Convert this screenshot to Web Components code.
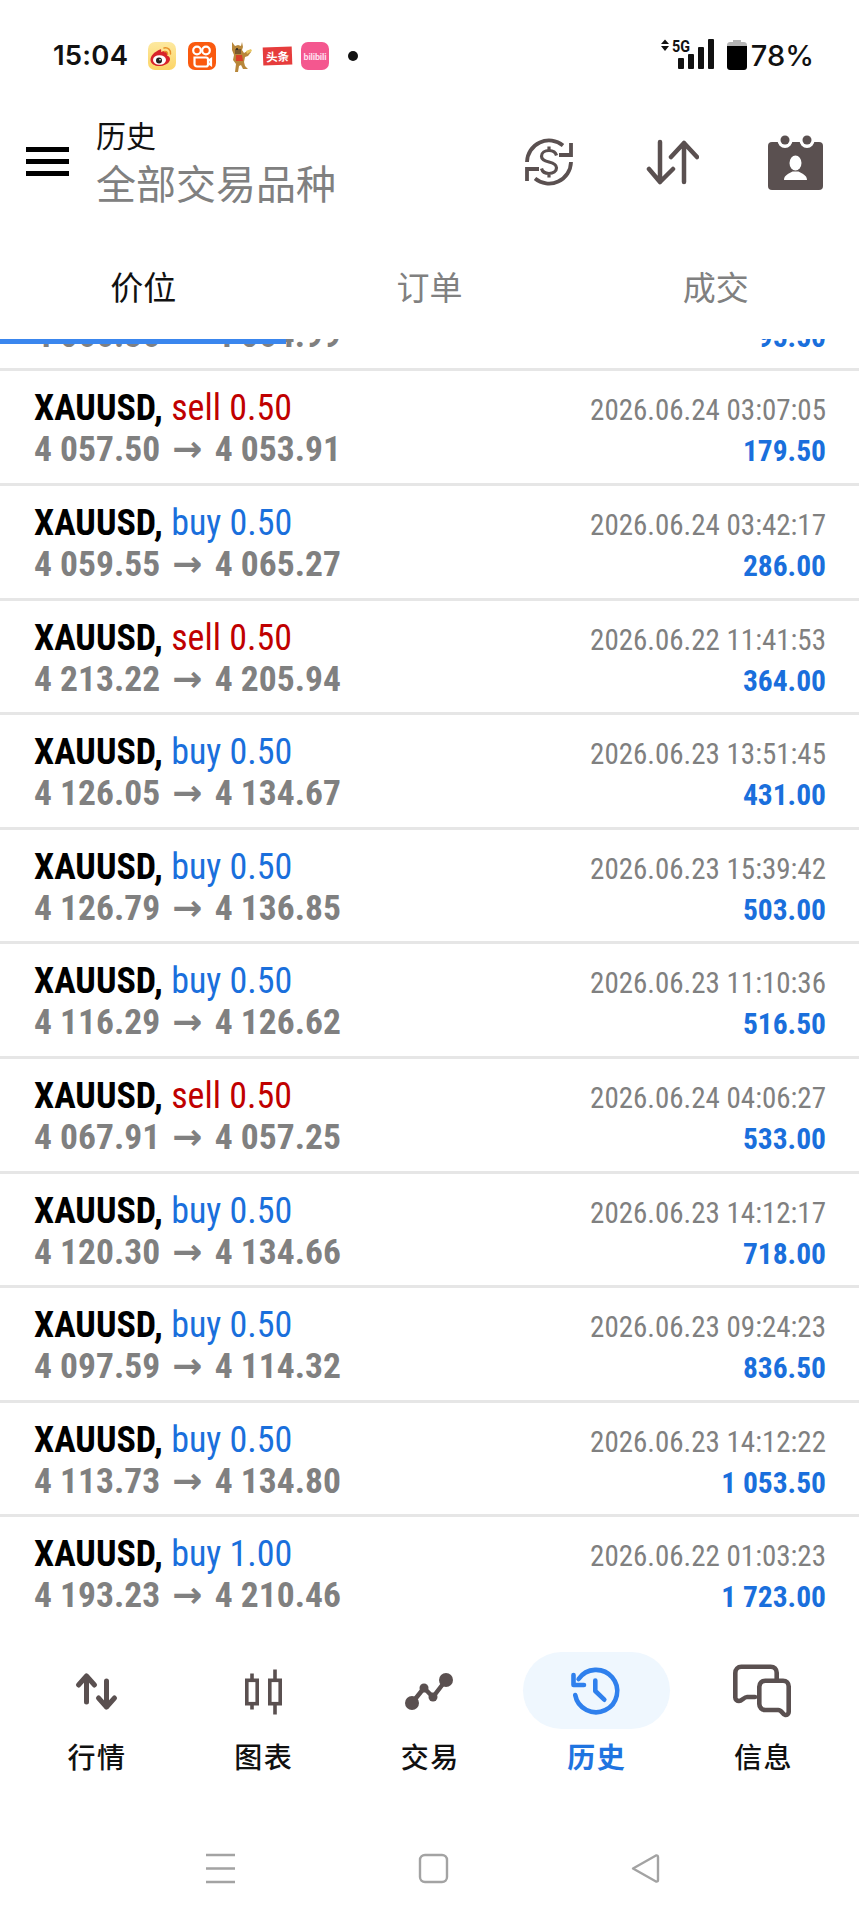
<!DOCTYPE html>
<html lang="zh"><head><meta charset="utf-8"><title>历史</title>
<style>
html,body{margin:0;padding:0;background:#fff}
body{width:859px;height:1920px;overflow:hidden;font-family:Roboto,"Noto Sans CJK SC",sans-serif}
</style></head><body>
<mt-app>
  <mt-status></mt-status>
  <mt-appbar></mt-appbar>
  <mt-tabs></mt-tabs>
  <mt-list>
    <mt-row sym="XAUUSD" side="sell" vol="0.50" from="4 066.36" to="4 064.99" time="2026.06.24 02:41:18" profit="95.50"></mt-row>
    <mt-row sym="XAUUSD" side="sell" vol="0.50" from="4 057.50" to="4 053.91" time="2026.06.24 03:07:05" profit="179.50"></mt-row>
    <mt-row sym="XAUUSD" side="buy" vol="0.50" from="4 059.55" to="4 065.27" time="2026.06.24 03:42:17" profit="286.00"></mt-row>
    <mt-row sym="XAUUSD" side="sell" vol="0.50" from="4 213.22" to="4 205.94" time="2026.06.22 11:41:53" profit="364.00"></mt-row>
    <mt-row sym="XAUUSD" side="buy" vol="0.50" from="4 126.05" to="4 134.67" time="2026.06.23 13:51:45" profit="431.00"></mt-row>
    <mt-row sym="XAUUSD" side="buy" vol="0.50" from="4 126.79" to="4 136.85" time="2026.06.23 15:39:42" profit="503.00"></mt-row>
    <mt-row sym="XAUUSD" side="buy" vol="0.50" from="4 116.29" to="4 126.62" time="2026.06.23 11:10:36" profit="516.50"></mt-row>
    <mt-row sym="XAUUSD" side="sell" vol="0.50" from="4 067.91" to="4 057.25" time="2026.06.24 04:06:27" profit="533.00"></mt-row>
    <mt-row sym="XAUUSD" side="buy" vol="0.50" from="4 120.30" to="4 134.66" time="2026.06.23 14:12:17" profit="718.00"></mt-row>
    <mt-row sym="XAUUSD" side="buy" vol="0.50" from="4 097.59" to="4 114.32" time="2026.06.23 09:24:23" profit="836.50"></mt-row>
    <mt-row sym="XAUUSD" side="buy" vol="0.50" from="4 113.73" to="4 134.80" time="2026.06.23 14:12:22" profit="1 053.50"></mt-row>
    <mt-row sym="XAUUSD" side="buy" vol="1.00" from="4 193.23" to="4 210.46" time="2026.06.22 01:03:23" profit="1 723.00"></mt-row>
  </mt-list>
  <mt-nav>
    <mt-nav-item label="行情"><svg width="60" height="60" viewBox="0 0 60 60" fill="none" stroke="#5a5050" stroke-width="5" stroke-linecap="round" stroke-linejoin="round"><path d="M20.500 15V41M12.500 24l8-9 8 9M40.500 20V46M32.500 37l8 9 8-9"/></svg></mt-nav-item>
    <mt-nav-item label="图表"><svg width="60" height="60" viewBox="0 0 60 60" fill="none" stroke="#5a5050" stroke-width="3.600"><path d="M19 12.500V48.500M42 8.500V53.500"/><rect x="13.800" y="19.300" width="10.400" height="23.400" fill="#fff"/><rect x="36.800" y="19.300" width="10.400" height="23.400" fill="#fff"/></svg></mt-nav-item>
    <mt-nav-item label="交易"><svg width="60" height="60" viewBox="0 0 60 60" fill="#5a5050" stroke="#5a5050" stroke-width="4.500" stroke-linejoin="round"><path fill="none" d="M13 42 25 27 34 36 47 19"/><circle cx="13" cy="42" r="7" stroke="none"/><circle cx="25" cy="27" r="4.500" stroke="none"/><circle cx="34" cy="36" r="4.500" stroke="none"/><circle cx="47" cy="19" r="7" stroke="none"/></svg></mt-nav-item>
    <mt-nav-item label="历史" active><svg width="60" height="60" viewBox="0 0 60 60" fill="none" stroke="#2f80ed" stroke-width="4.600" stroke-linecap="round" stroke-linejoin="round"><path d="M12.600 18A21.200 21.200 0 1 1 9.200 34"/><path d="M7.500 14V24H18"/><path d="M29.300 19.500V30L38.300 38.700"/></svg></mt-nav-item>
    <mt-nav-item label="信息"><svg width="60" height="60" viewBox="0 0 60 60" fill="none" stroke="#5a5050" stroke-width="4.600" stroke-linejoin="round" stroke-linecap="round"><path d="M22 36H14c-3 0-5 4-8 4-2 0-3.700-1.500-3.700-3.500V12c0-3.500 2.500-6.200 6-6.200H37.700c3.500 0 6 2.500 6 6V19.800"/><path d="M32.300 19.800H50c3.500 0 5.700 2.300 5.700 5.700V51c0 2-1.500 3.200-3.500 3-3-.4-3-5-7-5H32.300c-3.500 0-6-2.500-6-6V25.800c0-3.500 2.500-6 6-6Z"/></svg></mt-nav-item>
  </mt-nav>
  <mt-gestures></mt-gestures>
</mt-app>
<script>
function def(name, css, html){
  customElements.define(name, class extends HTMLElement{
    constructor(){super();const r=this.attachShadow({mode:'open'});r.innerHTML='<style>'+css+'</style>'+(typeof html==='function'?'':html)}
    connectedCallback(){ if(typeof html==='function'){ this.shadowRoot.innerHTML='<style>'+css+'</style>'+html(this) } }
  });
}
def('mt-app',':host{display:flex;flex-direction:column;width:859px;height:1920px;background:#fff}','<slot></slot>');

def('mt-status',`
:host{display:flex;align-items:center;height:92px;box-sizing:border-box;padding:19px 45px 0 53px;flex:none;color:#111}
.t{font:600 27.500px/1 Inter,Roboto,sans-serif;letter-spacing:.2px;width:94px}
.ic{display:flex;align-items:center}
.b{display:block;flex:none}
.p{font:500 29px/1 Inter,Roboto,sans-serif;margin-left:4px}
.sp{flex:1}
`,`
<span class="t">15:04</span>
<div class="ic">
<svg class="b" width="30" height="30" viewBox="0 0 30 30" style="margin-right:10px"><defs><linearGradient id="w" x1="0" y1="0" x2="0" y2="1"><stop offset="0" stop-color="#fde9a0"/><stop offset="1" stop-color="#fcd466"/></linearGradient></defs><rect x="1" y="1" width="28" height="28" rx="7" fill="url(#w)"/><path d="M13 8.500C7 11 3.500 15 3.500 19c0 4 5 6.500 10 6 6-.5 9.500-4 9.500-7 0-2-1.500-3-3-3.500.5-2 .5-3-.5-4-1.500-1-3.500-.3-5.500.5 .5-2 .2-3-1-2.500Z" fill="#d8232a"/><ellipse cx="12.500" cy="19" rx="6.500" ry="4.800" fill="#fff"/><circle cx="12" cy="19.500" r="3" fill="#222"/><circle cx="13" cy="18.700" r=".8" fill="#fff"/><path d="M17 7c4-1 7 2 6.500 6M17.500 10.500c2-.5 3.200 1 3 2.800" fill="none" stroke="#e8912a" stroke-width="1.500" stroke-linecap="round"/></svg>
<svg class="b" width="30" height="30" viewBox="0 0 30 30" style="margin-right:11px"><rect x="1" y="1" width="28" height="28" rx="7" fill="#fa5a0f"/><g fill="none" stroke="#fff" stroke-width="2.200"><circle cx="10" cy="9.500" r="3.800"/><circle cx="19" cy="9.500" r="3.800"/><path d="M7.500 16.500H19c1.200 0 2 .8 2 2v5c0 1.200-.8 2-2 2H10c-1.500 0-2.500-1-2.500-2.500Z"/><path d="M21 20l3-2v6l-3-2"/></g></svg>
<svg class="b" width="26" height="32" viewBox="0 0 26 32" style="margin-right:9px"><path d="M4 2l3 4 3-1 3 1 1-4 1 5-1 3 2 3 5-3 2 2-3 4-3 1-1 5 1 4 3 3h-5l-2-4-2 1-1 6H7l1-8-3-4 1-5-2-5Z" fill="#b8873a"/><path d="M7 9h6v5H7z" fill="#7a5a30"/><path d="M8 15h6l1 6H8z" fill="#d8402a"/><circle cx="9" cy="9" r="1" fill="#222"/><path d="M18 11l5-2 1 2-5 3z" fill="#e8c560"/></svg>
<span class="b" style="width:29px;height:18px;background:#e63c3c;color:#fff;font:700 11.500px/18px 'Noto Sans CJK SC',sans-serif;text-align:center;transform:rotate(-2deg);margin-right:9px;white-space:nowrap;overflow:hidden">头条</span>
<span class="b" style="width:28px;height:28px;border-radius:7px;background:#f4578f;color:#fde;font:700 9px/30px Roboto,sans-serif;text-align:center;white-space:nowrap;overflow:hidden;letter-spacing:-.2px">bilibili</span>
<span class="b" style="width:10px;height:10px;border-radius:50%;background:#111;margin-left:19px"></span>
</div>
<span class="sp"></span>
<svg class="b" width="54" height="32" viewBox="0 0 54 32" style="margin-right:13px;margin-top:-3px"><path d="M1 6l4-4.500L9 6zM1 8h8l-4 5z" fill="#111"/><rect x="18" y="20" width="6" height="11" rx="1" fill="#111"/><rect x="28" y="16" width="6" height="15" rx="1" fill="#111"/><rect x="38" y="9" width="6" height="22" rx="1" fill="#111"/><rect x="48" y="1" width="6" height="30" rx="1" fill="#111"/><text x="12" y="14" font-family="Roboto,sans-serif" font-weight="700" font-size="17" fill="#111" textLength="18" lengthAdjust="spacingAndGlyphs">5G</text></svg>
<svg class="b" width="20" height="31" viewBox="0 0 20 31" style="margin-top:-3px"><path d="M6 1h8v2h3c1.500 0 3 1 3 3v6H0V6c0-2 1.500-3 3-3h3z" fill="#b5b5b5"/><path d="M0 7h20v21c0 1.700-1.300 3-3 3H3c-1.700 0-3-1.300-3-3z" fill="#000"/></svg>
<span class="p">78%</span>
`);

def('mt-appbar',`
:host{display:flex;align-items:center;height:138px;box-sizing:border-box;flex:none;padding:0 36px 0 26px}
.m{width:43px;height:29px;flex:none;margin-right:27px;display:flex;flex-direction:column;justify-content:space-between}
.m i{display:block;height:5px;background:#000}
.tt{flex:1;display:flex;flex-direction:column;font-family:"Noto Sans CJK SC",sans-serif;padding-top:3px}
.a{font-size:30px;line-height:34px;color:#111;margin-bottom:5px}
.s{font-size:40px;line-height:52px;color:#808080;white-space:nowrap}
.ic{display:flex;align-items:center;padding-top:2px}
svg{display:block;flex:none}
`,`
<div class="m"><i></i><i></i><i></i></div>
<div class="tt"><span class="a">历史</span><span class="s">全部交易品种</span></div>
<div class="ic">
<svg width="50" height="50" viewBox="0 0 50 50" fill="none" stroke="#5a5050" stroke-width="3.800" style="margin-right:71px"><path d="M3 25A22 22 0 0 1 39 8.500M47 25A22 22 0 0 1 11 41.500"/><path d="M47 6V18H35M3 44V32H15"/><path d="M32.500 18.500c-.8-3-3.800-5-7.500-5-4 0-7.500 2-7.500 5.700 0 3.500 3.500 4.800 7.500 5.800 4 1 7.500 2.300 7.500 5.800 0 3.700-3.500 5.700-7.500 5.700-3.700 0-6.700-2-7.500-5M25 9.500v4M25 36.500v4" stroke-width="3.200"/></svg>
<svg width="54" height="46" viewBox="0 0 54 46" fill="none" stroke="#5a5050" stroke-width="4.500" stroke-linecap="round" stroke-linejoin="round" style="margin-right:69px"><path d="M15 3V43M4 30 15 43 28 30M39 43V4M26 18 39 4 52 18"/></svg>
<svg width="55" height="55" viewBox="0 0 55 55"><rect x="0" y="7" width="55" height="48" rx="4" fill="#5a5050"/><circle cx="17" cy="5.500" r="7.500" fill="#fff"/><circle cx="39" cy="5.500" r="7.500" fill="#fff"/><circle cx="17" cy="5" r="4.500" fill="#5a5050"/><circle cx="39" cy="5" r="4.500" fill="#5a5050"/><ellipse cx="27.500" cy="28" rx="6" ry="7.500" fill="#fff"/><path d="M16 45c0-5 5-6.500 8.500-8.500h6c3.500 2 8.500 3.500 8.500 8.500Z" fill="#fff"/></svg>
</div>
`);

def('mt-tabs',`
:host{display:block;flex:none;position:relative;z-index:2}
.r{display:grid;grid-template-columns:repeat(3,286.333px);height:109px;background:#fff;font:33px/1 "Noto Sans CJK SC",sans-serif;color:#808080;text-align:center}
.r span{padding-top:40px;display:block}
.on{color:#111}
.bar{position:absolute;left:0;top:109px;width:286px;height:5px;background:#3a86ee}
`,`
<div class="r"><span class="on">价位</span><span>订单</span><span>成交</span></div><div class="bar"></div>
`);

def('mt-list',`
:host{display:flex;flex-direction:column;justify-content:flex-end;flex:1;min-height:0;overflow:hidden}
`,'<slot></slot>');

def('mt-row',`
:host{display:flex;justify-content:space-between;flex:none;height:114.600px;box-sizing:border-box;border-bottom:3px solid #e6e6e6;padding:17px 33px 0 34px;font-family:Roboto,sans-serif;font-stretch:75%}
:host(:last-child){border-bottom:0}
.l,.rt{display:flex;flex-direction:column}
.rt{align-items:flex-end}
.n{font-size:36px;line-height:41px;white-space:nowrap}
.n b{color:#000;font-weight:700}
.sell{color:#c00000}.buy{color:#1a6fdc}
.pr{font-size:35.500px;line-height:39px;font-weight:700;color:#808080;white-space:nowrap}
.ar{font-family:"DejaVu Sans",sans-serif;font-stretch:normal;font-size:36px;margin:0 4px}
.tm{font-size:29px;line-height:41px;color:#808080;white-space:nowrap;padding-top:2px}
.pf{font-size:29.500px;line-height:38px;font-weight:700;color:#1a6fdc;white-space:nowrap;margin-top:1px}
`,el=>{const a=k=>el.getAttribute(k);return `
<div class="l"><span class="n"><b>${a('sym')},</b> <span class="${a('side')}">${a('side')} ${a('vol')}</span></span><span class="pr">${a('from')} <span class="ar">→</span> ${a('to')}</span></div>
<div class="rt"><span class="tm">${a('time')}</span><span class="pf">${a('profit')}</span></div>`});

def('mt-nav',`
:host{display:grid;grid-template-columns:repeat(5,166.600px);height:176px;box-sizing:border-box;padding:20px 0 0 13px;flex:none}
`,'<slot></slot>');

def('mt-nav-item',`
:host{display:flex;flex-direction:column;align-items:center}
.p{width:147px;height:77px;border-radius:39px;display:flex;align-items:center;justify-content:center}
:host([active]) .p{background:#eff7fe}
.l{font:500 28px/1 "Noto Sans CJK SC",sans-serif;color:#111;margin-top:13px;letter-spacing:1.500px;padding-left:1.500px}
:host([active]) .l{color:#1f74e0;font-weight:700}
`,el=>`<div class="p"><slot></slot></div><span class="l">${el.getAttribute('label')}</span>`);

def('mt-gestures',`
:host{display:block;flex:none;height:112px;box-sizing:border-box;padding-top:44px}
svg{display:block}
`,`
<svg width="859" height="32" viewBox="0 0 859 32" fill="none" stroke="#a3a3a3" stroke-width="2.400" stroke-linejoin="round"><path d="M206 3H235M206 16.500H235M206 30H235"/><rect x="420" y="3" width="27" height="27" rx="5"/><path d="M633 16.500 656 3.500Q658 3 658 5V28Q658 30 656 29.500Z"/></svg>
`);
</script>
</body></html>
